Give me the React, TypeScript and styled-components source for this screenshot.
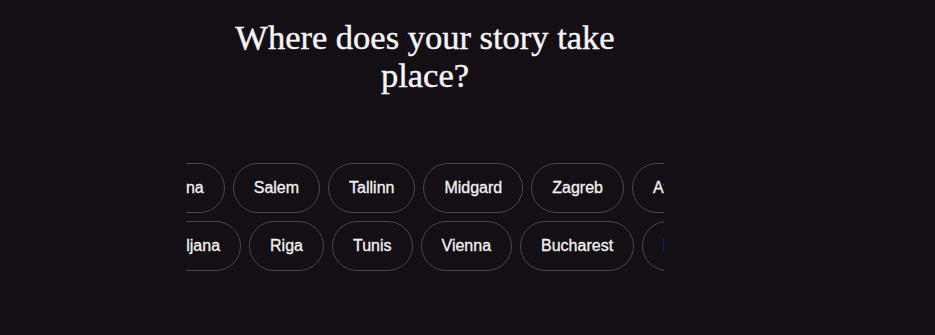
import styled, { createGlobalStyle } from 'styled-components';

const GlobalStyle = createGlobalStyle`
  html, body {
    margin: 0;
    padding: 0;
    background: #130f14;
  }
  body {
    font-family: "Liberation Sans", Arial, sans-serif;
    color: #f4f2f5;
  }
`;

const rows = [
  { offset: -54, cities: ['Verona', 'Salem', 'Tallinn', 'Midgard', 'Zagreb', 'Athens'] },
  { offset: -51, cities: ['Ljubljana', 'Riga', 'Tunis', 'Vienna', 'Bucharest', 'Berlin'] },
];

const App = () => {
  return (
    <Page>
      <GlobalStyle />
      <Panel>
        <Title>Where does your story take place?</Title>
        <Marquee>
          {rows.map((row, i) => (
            <Row key={i} $offset={row.offset}>
              {row.cities.map((city) => (
                <Chip key={city}>{city}</Chip>
              ))}
            </Row>
          ))}
        </Marquee>
      </Panel>
    </Page>
  );
};

const Page = styled.div`
  width: 935px;
  height: 335px;
  background: #130f14;
  overflow: hidden;
`;

const Panel = styled.div`
  width: 478px;
  margin-left: 186px;
  padding-top: 18px;
  display: flex;
  flex-direction: column;
  align-items: center;
`;

const Title = styled.h1`
  margin: 0;
  width: 420px;
  font-family: "Liberation Serif", "DejaVu Serif", serif;
  font-weight: 400;
  font-size: 34.5px;
  line-height: 38px;
  text-align: center;
  color: #f7f5f8;
  -webkit-text-stroke: 0.4px #f7f5f8;
`;

const Marquee = styled.div`
  width: 100%;
  margin-top: 69px;
  display: flex;
  flex-direction: column;
  gap: 8px;
  overflow: hidden;
`;

const Row = styled.div<{ $offset: number }>`
  display: flex;
  gap: 8px;
  white-space: nowrap;
  margin-left: ${(p) => p.$offset}px;
`;

const Chip = styled.div`
  flex: none;
  height: 50px;
  box-sizing: border-box;
  padding: 0 20px;
  display: flex;
  align-items: center;
  border: 1px solid #4a464b;
  border-radius: 999px;
  font-size: 16px;
  font-weight: 400;
  -webkit-text-stroke: 0.3px #f4f2f5;
  color: #f4f2f5;
`;

export default App;
